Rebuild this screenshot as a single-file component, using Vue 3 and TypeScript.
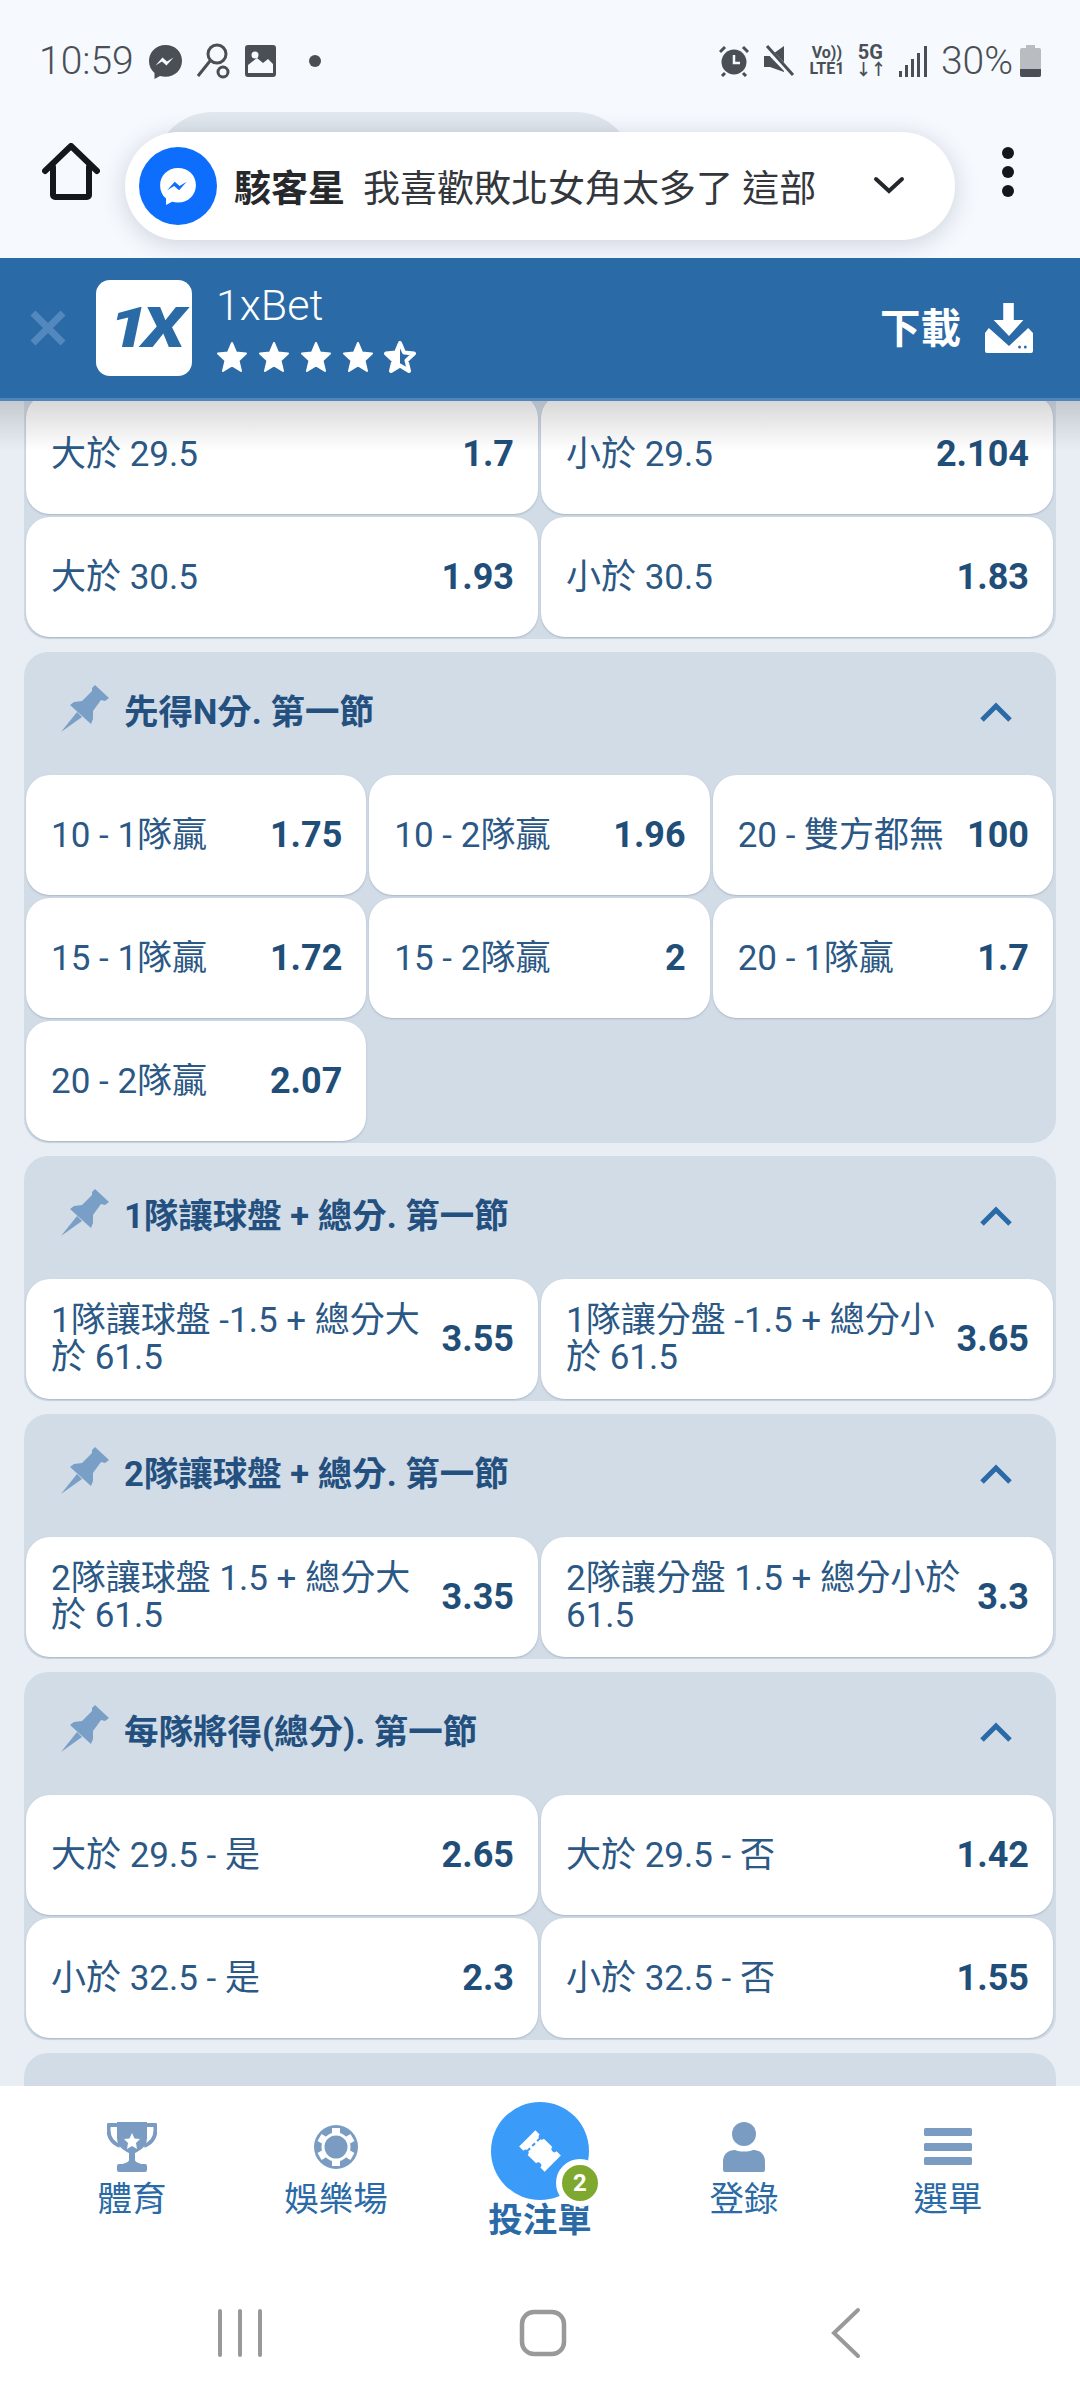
<script setup lang="ts">
interface Odd {
  label: string;
  value: string;
}

interface Market {
  title?: string;
  cols: number;
  odds: Odd[];
}

const markets: Market[] = [
  {
    cols: 2,
    odds: [
      { label: '大於 29.5', value: '1.7' },
      { label: '小於 29.5', value: '2.104' },
      { label: '大於 30.5', value: '1.93' },
      { label: '小於 30.5', value: '1.83' },
    ],
  },
  {
    title: '先得N分. 第一節',
    cols: 3,
    odds: [
      { label: '10 - 1隊贏', value: '1.75' },
      { label: '10 - 2隊贏', value: '1.96' },
      { label: '20 - 雙方都無', value: '100' },
      { label: '15 - 1隊贏', value: '1.72' },
      { label: '15 - 2隊贏', value: '2' },
      { label: '20 - 1隊贏', value: '1.7' },
      { label: '20 - 2隊贏', value: '2.07' },
    ],
  },
  {
    title: '1隊讓球盤 + 總分. 第一節',
    cols: 2,
    odds: [
      { label: '1隊讓球盤 -1.5 + 總分大於 61.5', value: '3.55' },
      { label: '1隊讓分盤 -1.5 + 總分小於 61.5', value: '3.65' },
    ],
  },
  {
    title: '2隊讓球盤 + 總分. 第一節',
    cols: 2,
    odds: [
      { label: '2隊讓球盤 1.5 + 總分大於 61.5', value: '3.35' },
      { label: '2隊讓分盤 1.5 + 總分小於 61.5', value: '3.3' },
    ],
  },
  {
    title: '每隊將得(總分). 第一節',
    cols: 2,
    odds: [
      { label: '大於 29.5 - 是', value: '2.65' },
      { label: '大於 29.5 - 否', value: '1.42' },
      { label: '小於 32.5 - 是', value: '2.3' },
      { label: '小於 32.5 - 否', value: '1.55' },
    ],
  },
  { title: ' ', cols: 2, odds: [] },
];

const starPath = 'M16 2 L20 11.5 L30 12.5 L22.5 19.5 L25 30 L16 24.5 L7 30 L9.5 19.5 L2 12.5 L12 11.5 Z';
</script>

<template>
  <div class="phone">
    <header class="top">
      <div class="status">
        <span class="time">10:59</span>
        <svg class="st-icon" width="35" height="35" viewBox="0 0 35 35">
          <path fill="#4a4f55" d="M17.5 1C8 1 1 8 1 17c0 5 2 9 5.500 12v6l5.500-3c1.700.5 3.500.7 5.500.7 9.500 0 16.500-7 16.500-16S27 1 17.500 1z" />
          <path fill="#f6f9fe" d="M7.500 21.500l7-8 4.500 4 6.500-4-7 8-4.500-4z" />
        </svg>
        <svg class="st-icon" width="34" height="36" viewBox="0 0 34 36">
          <circle cx="20" cy="11" r="9" fill="none" stroke="#4a4f55" stroke-width="3" />
          <path d="M13 18 L1 33" stroke="#4a4f55" stroke-width="3" fill="none" />
          <circle cx="26" cy="29" r="5" fill="none" stroke="#4a4f55" stroke-width="3" />
        </svg>
        <svg class="st-icon" width="31" height="32" viewBox="0 0 31 32">
          <rect x="0" y="0" width="31" height="32" rx="3" fill="#4a4f55" />
          <rect x="3" y="4" width="25" height="24" fill="#f6f9fe" />
          <path d="M3 4 H28 V19 L23 14 L18 18 L12 13 L3 20 Z" fill="#4a4f55" />
          <circle cx="10" cy="10" r="3.500" fill="#f6f9fe" />
        </svg>
        <span class="dot"></span>
        <span class="spacer"></span>
        <svg class="st-icon" width="30" height="32" viewBox="0 0 30 32">
          <circle cx="15" cy="17" r="12.500" fill="#4a4f55" />
          <path d="M15 10 V18 H21" stroke="#f6f9fe" stroke-width="2.500" fill="none" />
          <path d="M1 7 L6 2 M24 2 L29 7 M6 28 L3 31 M24 28 L27 31" stroke="#4a4f55" stroke-width="3" />
        </svg>
        <svg class="st-icon mute" width="32" height="32" viewBox="0 0 32 32">
          <path d="M1 11 H7 L21 1 V27 L7 22 H1 Z" fill="#4a4f55" />
          <path d="M3 3 L30 31" stroke="#f6f9fe" stroke-width="6" />
          <path d="M4 1 L30 30" stroke="#4a4f55" stroke-width="3" />
        </svg>
        <span class="volte"><span>Vo))</span><span>LTE1</span></span>
        <span class="fiveg"><span>5G</span><span class="arrows">↓↑</span></span>
        <svg class="st-icon" width="28" height="31" viewBox="0 0 28 31">
          <rect x="0" y="25" width="3" height="6" fill="#4a4f55" />
          <rect x="6" y="19" width="3" height="12" fill="#4a4f55" />
          <rect x="12" y="13" width="3" height="18" fill="#4a4f55" />
          <rect x="18" y="7" width="3" height="24" fill="#4a4f55" />
          <rect x="25" y="0" width="3" height="31" fill="#4a4f55" />
        </svg>
        <span class="pct">30%</span>
        <svg class="battery" width="21" height="32" viewBox="0 0 21 32">
          <path d="M6 0 H15 V3 H19 a2 2 0 0 1 2 2 V30 a2 2 0 0 1-2 2 H2 a2 2 0 0 1-2-2 V5 a2 2 0 0 1 2-2 H6 Z" fill="#b9bcc0" />
          <path d="M0 24 H21 V30 a2 2 0 0 1-2 2 H2 a2 2 0 0 1-2-2 Z" fill="#4a4f55" />
        </svg>
      </div>
      <div class="browser">
        <svg width="58" height="58" viewBox="0 0 58 58">
          <path d="M3 28 L29 3 L55 28" fill="none" stroke="#14171c" stroke-width="6" stroke-linecap="round" stroke-linejoin="round" />
          <path d="M11 24 V52 a2 2 0 0 0 2 2 H45 a2 2 0 0 0 2-2 V24" fill="none" stroke="#14171c" stroke-width="6" stroke-linecap="round" />
        </svg>
        <div class="kebab"><i></i><i></i><i></i></div>
      </div>
      <div class="pill-back"></div>
      <div class="pill">
        <span class="msg-circle">
          <svg width="38" height="40" viewBox="0 0 35 35">
            <path fill="#fff" d="M17.500 1C8 1 1 8 1 17c0 5 2 9 5.500 12v6l5.500-3c1.700.5 3.500.7 5.500.7 9.500 0 16.500-7 16.500-16S27 1 17.500 1z" />
            <path fill="#0d6efd" d="M7.500 21.500l7-8 4.500 4 6.500-4-7 8-4.500-4z" />
          </svg>
        </span>
        <b class="sender">駭客星</b>
        <span class="message">我喜歡敗北女角太多了 這部</span>
        <svg class="pill-chev" width="32" height="20" viewBox="0 0 32 20">
          <path d="M3 3 L16 15 L29 3" fill="none" stroke="#23262b" stroke-width="4" stroke-linecap="round" />
        </svg>
      </div>
    </header>

    <section class="banner">
      <svg class="close" width="36" height="36" viewBox="0 0 36 36">
        <path d="M3 3 L33 33 M33 3 L3 33" stroke="#5288bd" stroke-width="7" />
      </svg>
      <div class="logo"><span>1X</span></div>
      <div class="app-info">
        <div class="app-name">1xBet</div>
        <div class="stars">
          <svg v-for="n in 4" :key="n" width="32" height="32" viewBox="0 0 32 32">
            <path :d="starPath" fill="#fff" stroke="#fff" stroke-width="2" stroke-linejoin="round" />
          </svg>
          <svg width="32" height="32" viewBox="0 0 32 32">
            <path :d="starPath" fill="none" stroke="#fff" stroke-width="4" stroke-linejoin="round" />
            <path d="M16 2 L12 11.500 L2 12.500 L9.500 19.500 L7 30 L16 24.500 Z" fill="#fff" />
          </svg>
        </div>
      </div>
      <span class="spacer"></span>
      <b class="download">下載</b>
      <svg width="48" height="50" viewBox="0 0 50 50" preserveAspectRatio="none">
        <path d="M19 0 H30 V17 H40 L25 33 L9 17 H19 Z" fill="#fff" />
        <path d="M0 30 L4 25 L25 43 L45 25 L50 30 V48 a2 2 0 0 1-2 2 H2 a2 2 0 0 1-2-2 Z" fill="#fff" />
        <circle cx="36" cy="44" r="1.500" fill="#2a6aa6" />
        <circle cx="42" cy="44" r="1.500" fill="#2a6aa6" />
      </svg>
    </section>

    <main class="content">
      <div class="shade"></div>
      <div class="scroller">
        <div v-for="(m, i) in markets" :key="i" class="market">
          <div v-if="m.title" class="market-head">
            <svg class="pin" width="50" height="48" viewBox="0 0 50 48">
              <path d="M34 1 L48 14 L44 17 L40 16 L32 27 L32 35 L30 40 L9 21 L13 18 L21 17 L31 7 L31 4 Z" fill="#7a9fc7" />
              <path d="M0 48 L16 28 L21 33 Z" fill="#7a9fc7" />
            </svg>
            <span class="market-title">{{ m.title }}</span>
            <svg class="chev" width="34" height="22" viewBox="0 0 34 22">
              <path d="M3 18 L17 4 L31 18" fill="none" stroke="#2a6aa6" stroke-width="5" />
            </svg>
          </div>
          <div class="grid" :class="'cols-' + m.cols">
            <div v-for="odd in m.odds" :key="odd.label" class="odd">
              <span class="odd-label">{{ odd.label }}</span>
              <b class="odd-value">{{ odd.value }}</b>
            </div>
          </div>
        </div>
      </div>
    </main>

    <footer class="bottom">
      <nav class="tabs">
        <div class="tab">
          <svg width="50" height="50" viewBox="0 0 50 50">
            <path d="M10 3 H2 C0 14 5 21 13 24 M40 3 H48 C50 14 45 21 37 24" fill="none" stroke="#7a9cc2" stroke-width="4" />
            <path d="M10 0 H40 V16 C40 25 32 29 28 31 V38 C28 40 32 41 34 42 H16 C18 41 22 40 22 38 V31 C18 29 10 25 10 16 Z" fill="#7a9cc2" />
            <rect x="10" y="42" width="30" height="8" rx="2" fill="#7a9cc2" />
            <path d="M25 11 L27.500 16.500 L33 17 L29 21 L30 27 L25 24 L20 27 L21 21 L17 17 L22.500 16.500 Z" fill="#fff" />
          </svg>
          <span>體育</span>
        </div>
        <div class="tab">
          <svg width="50" height="50" viewBox="0 0 50 50">
            <circle cx="25" cy="25" r="22" fill="#7a9cc2" />
            <circle cx="25" cy="25" r="13" fill="none" stroke="#fff" stroke-width="3" />
            <g fill="#fff">
              <rect x="21" y="6" width="8" height="5" />
              <rect x="21" y="39" width="8" height="5" />
              <rect x="21" y="6" width="8" height="5" transform="rotate(60 25 25)" />
              <rect x="21" y="6" width="8" height="5" transform="rotate(120 25 25)" />
              <rect x="21" y="6" width="8" height="5" transform="rotate(240 25 25)" />
              <rect x="21" y="6" width="8" height="5" transform="rotate(300 25 25)" />
            </g>
          </svg>
          <span>娛樂場</span>
        </div>
        <div class="tab tab-active">
          <div class="bet-circle">
            <svg width="50" height="50" viewBox="0 0 50 50">
              <g transform="rotate(-45 25 25)">
                <path d="M13.500 7 H36.500 V13 a3 3 0 0 0 0 6 V31 a3 3 0 0 0 0 6 V43 H13.500 V37 a3 3 0 0 0 0-6 V19 a3 3 0 0 0 0-6 Z" fill="#fff" />
                <path d="M16 16 H34" stroke="#3a9bf8" stroke-width="2" stroke-dasharray="4 3" />
              </g>
            </svg>
            <span class="badge">2</span>
          </div>
          <span>投注單</span>
        </div>
        <div class="tab">
          <svg width="50" height="50" viewBox="0 0 50 50">
            <circle cx="25" cy="12" r="12" fill="#7a9cc2" />
            <path d="M4 48 V40 C4 32 9 28 16 28 C21 30 29 30 34 28 C41 28 46 32 46 40 V48 a2 2 0 0 1-2 2 H6 a2 2 0 0 1-2-2 Z" fill="#7a9cc2" />
          </svg>
          <span>登錄</span>
        </div>
        <div class="tab">
          <svg width="50" height="50" viewBox="0 0 50 50">
            <rect x="1" y="6" width="48" height="8" rx="1.500" fill="#7a9cc2" />
            <rect x="1" y="21" width="48" height="8" rx="1.500" fill="#7a9cc2" />
            <rect x="1" y="35" width="48" height="8" rx="1.500" fill="#7a9cc2" />
          </svg>
          <span>選單</span>
        </div>
      </nav>
      <div class="sysnav">
        <svg width="48" height="48" viewBox="-1 0 48 48">
          <path d="M3 2 V46 M23 2 V46 M43 2 V46" stroke="#999" stroke-width="4" stroke-linecap="round" />
        </svg>
        <svg width="48" height="48" viewBox="0 0 48 48">
          <rect x="3" y="3" width="42" height="42" rx="12" fill="none" stroke="#999" stroke-width="4.500" />
        </svg>
        <svg width="48" height="52" viewBox="-9 0 48 52">
          <path d="M27 3 L3 26 L27 49" fill="none" stroke="#999" stroke-width="4" stroke-linecap="round" />
        </svg>
      </div>
    </footer>
  </div>
</template>

<style scoped>
.phone {
  position: relative;
  width: 1080px;
  height: 2400px;
  display: flex;
  flex-direction: column;
  overflow: hidden;
  background: #f6f9fe;
  font-family: Roboto, "Noto Sans CJK TC", sans-serif;
}

.top {
  height: 258px;
  flex: none;
  display: flex;
  flex-direction: column;
  background: #f6f9fe;
}

.status {
  height: 32px;
  margin-top: 45px;
  padding: 0 39px 0 39px;
  display: flex;
  align-items: center;
  color: #4a4f55;
}

.time {
  font-size: 39px;
  font-weight: 300;
  margin-right: 14px;
}

.st-icon {
  flex: none;
  margin-right: 14px;
}

.dot {
  width: 12px;
  height: 12px;
  margin-left: 19px;
  border-radius: 50%;
  background: #4a4f55;
}

.spacer {
  flex: 1;
}

.mute {
  margin-right: 13px;
}

.volte {
  display: flex;
  flex-direction: column;
  align-items: center;
  width: 38px;
  margin-right: 12px;
  font-size: 16px;
  font-weight: 700;
  line-height: 16px;
}

.fiveg {
  display: flex;
  flex-direction: column;
  align-items: center;
  width: 25px;
  margin-right: 16px;
  font-size: 20px;
  font-weight: 700;
  line-height: 17px;
}

.arrows {
  font-size: 16px;
  letter-spacing: -1px;
}

.pct {
  margin-right: 7px;
  font-size: 39px;
  font-weight: 300;
}

.battery {
  flex: none;
}

.browser {
  margin-top: 66px;
  padding: 0 66px 0 42px;
  display: flex;
  justify-content: space-between;
}

.kebab {
  display: flex;
  flex-direction: column;
  gap: 7px;
  padding-top: 4px;
}

.kebab i {
  width: 12px;
  height: 12px;
  border-radius: 50%;
  background: #14171c;
}

.pill-back {
  position: absolute;
  left: 153px;
  top: 112px;
  width: 482px;
  height: 60px;
  border-radius: 60px 60px 0 0;
  background: linear-gradient(#e2e8ee, #d4dbe3);
}

.pill {
  position: absolute;
  left: 125px;
  top: 132px;
  width: 830px;
  height: 108px;
  padding: 0 50px 0 14px;
  box-sizing: border-box;
  display: flex;
  align-items: center;
  border-radius: 54px;
  background: #fff;
  box-shadow: 0 4px 24px rgba(60, 75, 95, 0.22);
}

.msg-circle {
  width: 78px;
  height: 78px;
  flex: none;
  display: flex;
  align-items: center;
  justify-content: center;
  border-radius: 50%;
  background: #0d6efd;
}

.sender {
  margin-left: 17px;
  font-size: 37px;
  font-weight: 700;
  color: #26282c;
}

.message {
  margin-left: 18px;
  font-size: 37px;
  color: #33363b;
  white-space: nowrap;
}

.pill-chev {
  margin-left: auto;
}

.banner {
  height: 143px;
  flex: none;
  box-sizing: border-box;
  padding: 0 47px 0 30px;
  display: flex;
  align-items: center;
  background: #2a6aa6;
  border-bottom: 3px solid #4f86bb;
  position: relative;
  z-index: 2;
}

.logo {
  width: 96px;
  height: 96px;
  margin-left: 30px;
  flex: none;
  display: flex;
  align-items: center;
  justify-content: center;
  border-radius: 14px;
  background: #fff;
}

.logo span {
  font-size: 56px;
  font-weight: 900;
  font-style: italic;
  letter-spacing: -5px;
  line-height: 1;
  color: #2a6aa6;
  transform: scaleX(1.25);
}

.app-info {
  margin-left: 24px;
  display: flex;
  flex-direction: column;
}

.app-name {
  margin-top: -2px;
  font-size: 43px;
  font-weight: 300;
  line-height: 48px;
  color: #fff;
}

.stars {
  margin-top: 12px;
  display: flex;
  gap: 10px;
}

.download {
  margin: -5px 24px 0 0;
  font-size: 40.5px;
  font-weight: 700;
  color: #fff;
}

.content {
  position: relative;
  flex: 1;
  min-height: 0;
  overflow: hidden;
  background: #e8eef4;
}

.shade {
  position: absolute;
  left: 0;
  right: 0;
  top: 0;
  height: 50px;
  z-index: 1;
  background: linear-gradient(rgba(60, 60, 60, 0.2), rgba(60, 60, 60, 0));
}

.scroller {
  margin-top: -7px;
  padding: 0 24px;
  display: flex;
  flex-direction: column;
  gap: 13px;
}

.market {
  padding: 0 3px 2px 2px;
  border-radius: 0 0 24px 24px;
  background: #d2dce7;
}

.market-head {
  height: 123px;
  box-sizing: border-box;
  padding: 0 19px 9px 35px;
  display: flex;
  align-items: center;
}

.market:not(:first-child) {
  border-radius: 24px;
}

.pin {
  flex: none;
  margin: -2px 13px 0 0;
}

.market-title {
  font-size: 34.5px;
  font-weight: 700;
  color: #23507e;
}

.chev {
  margin: 8px 21px 0 auto;
}

.grid {
  display: grid;
  gap: 3px;
}

.cols-2 {
  grid-template-columns: repeat(2, 1fr);
}

.cols-3 {
  grid-template-columns: repeat(3, 1fr);
}

.odd {
  height: 120px;
  box-sizing: border-box;
  padding: 0 24px 0 25px;
  display: flex;
  align-items: center;
  justify-content: space-between;
  gap: 16px;
  border-radius: 24px;
  background: #fff;
  box-shadow: 0 1px 2px rgba(90, 110, 135, 0.35);
}

.odd-label {
  font-size: 35px;
  line-height: 37px;
  color: #2b5885;
}

.odd-value {
  flex: none;
  font-size: 36px;
  font-weight: 700;
  color: #1f4e79;
}

.bottom {
  height: 314px;
  flex: none;
  background: #fff;
  display: flex;
  flex-direction: column;
}

.tabs {
  height: 182px;
  padding: 0 30px;
  display: grid;
  grid-template-columns: repeat(5, 1fr);
}

.tab {
  padding-top: 36px;
  display: flex;
  flex-direction: column;
  align-items: center;
  gap: 7px;
  font-size: 34.5px;
  line-height: 40px;
  color: #2a6aa6;
}

.tab-active {
  padding-top: 16px;
  gap: 0;
  font-weight: 700;
}

.bet-circle {
  position: relative;
  width: 98px;
  height: 98px;
  display: flex;
  align-items: center;
  justify-content: center;
  border-radius: 50%;
  background: #3a9bf8;
}

.badge {
  position: absolute;
  right: -15px;
  bottom: -7px;
  width: 36px;
  height: 36px;
  display: flex;
  align-items: center;
  justify-content: center;
  border: 6px solid #fff;
  border-radius: 50%;
  background: #7fa82e;
  color: #fff;
  font-size: 24px;
  font-weight: 700;
}

.sysnav {
  flex: 1;
  padding: 0 210px 2px 216px;
  display: flex;
  align-items: center;
  justify-content: space-between;
}
</style>

<style>
body {
  margin: 0;
}
</style>
